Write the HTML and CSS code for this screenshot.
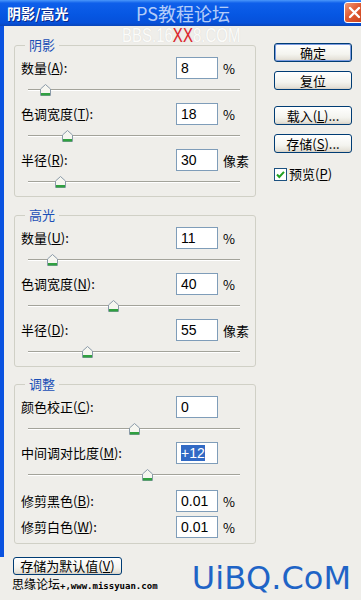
FILE: index.html
```html
<!DOCTYPE html>
<html lang="zh-CN">
<head>
  <meta charset="UTF-8" />
  <meta name="viewport" content="width=device-width, initial-scale=1" />
  <title>阴影/高光</title>
  <link rel="stylesheet" href="styles.css">
</head>
<body>
  <header class="titlebar">
    <span class="title">阴影/高光</span>
    <span class="close">
      <svg width="21" height="21" viewBox="0 0 21 21"><path d="M6 6 L15 15 M15 6 L6 15" stroke="#fff" stroke-width="2.4" stroke-linecap="round"/></svg>
    </span>
  </header>

  <!-- 水印 -->
  <div class="watermark">
    <span class="wm-ps">PS教程论坛</span>
    <span class="wm-bbs">BBS.16<b>XX</b>8.COM</span>
  </div>

  <main class="dialog">
    <div class="groups">
      <fieldset class="group">
        <legend>阴影</legend>
        <div class="field"><label>数量(<u>A</u>):</label><span class="input">8</span><span class="unit">%</span></div>
        <div class="slider"><div class="track"></div><span class="thumb" style="left: 8%"></span></div>
        <div class="field"><label>色调宽度(<u>T</u>):</label><span class="input">18</span><span class="unit">%</span></div>
        <div class="slider"><div class="track"></div><span class="thumb" style="left: 18.4%"></span></div>
        <div class="field"><label>半径(<u>R</u>):</label><span class="input">30</span><span class="unit">像素</span></div>
        <div class="slider"><div class="track"></div><span class="thumb" style="left: 15%"></span></div>
      </fieldset>

      <fieldset class="group">
        <legend>高光</legend>
        <div class="field"><label>数量(<u>U</u>):</label><span class="input">11</span><span class="unit">%</span></div>
        <div class="slider"><div class="track"></div><span class="thumb" style="left: 11.3%"></span></div>
        <div class="field"><label>色调宽度(<u>N</u>):</label><span class="input">40</span><span class="unit">%</span></div>
        <div class="slider"><div class="track"></div><span class="thumb" style="left: 40%"></span></div>
        <div class="field"><label>半径(<u>D</u>):</label><span class="input">55</span><span class="unit">像素</span></div>
        <div class="slider"><div class="track"></div><span class="thumb" style="left: 28%"></span></div>
      </fieldset>

      <fieldset class="group group-last">
        <legend>调整</legend>
        <div class="field"><label>颜色校正(<u>C</u>):</label><span class="input">0</span></div>
        <div class="slider"><div class="track"></div><span class="thumb" style="left: 50%"></span></div>
        <div class="field"><label>中间调对比度(<u>M</u>):</label><span class="input"><span class="selected">+12</span></span></div>
        <div class="slider"><div class="track"></div><span class="thumb" style="left: 56%"></span></div>
        <div class="field field-plain"><label>修剪黑色(<u>B</u>):</label><span class="input">0.01</span><span class="unit">%</span></div>
        <div class="field field-plain"><label>修剪白色(<u>W</u>):</label><span class="input">0.01</span><span class="unit">%</span></div>
      </fieldset>
    </div>

    <div class="actions">
      <button class="btn btn-default">确定</button>
      <button class="btn">复位</button>
      <button class="btn btn-gap">载入(<u>L</u>)...</button>
      <button class="btn">存储(<u>S</u>)...</button>
      <div class="check">
        <svg width="13" height="13" viewBox="0 0 13 13">
          <rect x="0.5" y="0.5" width="12" height="12" fill="#fff" stroke="#1c5180"/>
          <path d="M3 6.5 L5.3 9 L10 3.8" fill="none" stroke="#21a121" stroke-width="2"/>
        </svg>
        <span>预览(<u>P</u>)</span>
      </div>
    </div>
  </main>

  <footer class="footer">
    <div class="footer-left">
      <button class="btn btn-wide">存储为默认值(<u>V</u>)</button>
      <div class="credit">思缘论坛<span class="url">+,www.missyuan.com</span></div>
    </div>
    <div class="logo">UiBQ.CoM</div>
  </footer>
</body>
</html>
```

FILE: styles.css
```css
body {
  margin: 0;
  position: relative;
  width: 361px;
  height: 600px;
  overflow: hidden;
  background-color: #efeeea;
  color: #000;
  font-family: "Noto Sans CJK SC", "Noto Sans", sans-serif;
  font-size: 13px;
}
.titlebar {
  height: 26px;
  display: flex;
  justify-content: space-between;
  align-items: center;
  padding-left: 7px;
  background: linear-gradient(#4a97fa 0, #0e5fea 12%, #0657e3 55%, #0650da 88%, #0b45b8 100%);
  overflow: hidden;
}
.title {
  color: #fff;
  font-weight: bold;
  font-size: 14px;
  line-height: 16px;
  text-shadow: 1px 1px 0 #0b2a8a;
}
.close {
  width: 21px;
  height: 21px;
  margin-right: -4px;
  margin-top: -2px;
  box-sizing: border-box;
  border: 1px solid #fff;
  border-radius: 3px;
  background: linear-gradient(135deg, #f09a78 0, #e05a32 45%, #c8401c 100%);
  display: flex;
}
.close svg {
  margin: -1px;
}

.watermark {
  position: absolute;
  left: 0;
  top: 0;
  width: 361px;
  pointer-events: none;
}
.wm-ps {
  position: absolute;
  left: 136px;
  top: 1px;
  font-size: 18px;
  line-height: 24px;
  color: rgba(225, 236, 255, 0.8);
}
.wm-bbs {
  position: absolute;
  left: 122px;
  top: 24px;
  font-family: "Liberation Sans", sans-serif;
  font-size: 20px;
  line-height: 22px;
  color: #fcfcfa;
  text-shadow: 0 0 1px rgba(150, 150, 150, 0.3);
  transform: scaleX(0.75);
  transform-origin: left top;
}
.wm-bbs b {
  font-weight: normal;
  color: #e0242a;
}

.dialog {
  height: 531px;
  box-sizing: border-box;
  border-left: 4px solid #0a52e0;
  padding: 11px 0 0 10px;
  display: flex;
}
.groups {
  width: 242px;
}
.group {
  margin: 0 0 10px 0;
  padding: 4px 0 1px 0;
  border: 1px solid #d0d0c6;
  border-radius: 3px;
  min-inline-size: 0;
}
.group + .group-last {
  margin-top: -1px;
}
.group-last {
  padding-bottom: 5px;
}
.group legend {
  margin-left: 10px;
  padding: 0 4px;
  font-size: 13px;
  line-height: 16px;
  color: #1a4fb6;
}
.field {
  height: 22px;
  display: flex;
  align-items: center;
  padding-left: 6px;
}
.field-plain {
  margin-top: 2px;
}
.field-plain + .field-plain {
  margin-top: 4px;
}
.field label {
  flex: 0 0 155px;
  line-height: 22px;
}
.input {
  width: 42px;
  height: 22px;
  box-sizing: border-box;
  border: 1px solid #7f9db9;
  background: #fff;
  padding-left: 4px;
  font-family: "Liberation Sans", sans-serif;
  font-size: 14px;
  line-height: 20px;
}
.selected {
  background: #316ac5;
  color: #fff;
}
.unit {
  margin-left: 5px;
}
.slider {
  position: relative;
  height: 24px;
  margin-left: 13px;
  width: 212px;
}
.track {
  position: absolute;
  left: 0;
  right: 0;
  top: 10px;
  height: 1px;
  background: #a3a39a;
  border-bottom: 1px solid #fff;
}
.thumb {
  position: absolute;
  top: 5px;
  width: 11px;
  height: 12px;
  margin-left: -5px;
  background: url("data:image/svg+xml,%3Csvg xmlns='http://www.w3.org/2000/svg' width='11' height='12'%3E%3Cpath d='M0.5 11.5 V5 L5.5 0.5 L10.5 5 V11.5 Z' fill='%23f6f6f0' stroke='%238a9aa8'/%3E%3Crect x='1' y='9' width='9' height='2.5' fill='%2330a040'/%3E%3C/svg%3E");
}

.actions {
  margin-left: 18px;
  padding-top: 6px;
  width: 78px;
  display: flex;
  flex-direction: column;
}
.btn {
  height: 19px;
  padding: 0;
  border: 1px solid #003c74;
  border-radius: 3px;
  background: linear-gradient(#ffffff 0, #f4f4ef 60%, #e6e3da 88%, #d6d0c5 100%);
  font-family: "Noto Sans CJK SC", "Noto Sans", sans-serif;
  font-size: 13px;
  line-height: 16px;
  color: #000;
  margin-bottom: 9px;
}
.btn-default {
  box-shadow: inset 0 0 0 1px #7b9be0;
}
.btn-gap {
  margin-top: 7px;
}
.check {
  display: flex;
  align-items: center;
  gap: 2px;
  margin-top: 4px;
  line-height: 16px;
}

.footer {
  display: flex;
  justify-content: space-between;
}
.footer-left {
  padding-left: 13px;
}
.btn-wide {
  width: 109px;
  height: 18px;
  margin: 0;
  display: block;
}
.credit {
  margin-left: -1px;
  margin-top: 1px;
  font-size: 12px;
  line-height: 16px;
}
.url {
  font-family: "DejaVu Sans Mono", monospace;
  font-size: 9px;
  font-weight: bold;
}
.logo {
  margin-right: 10px;
  margin-top: 1px;
  font-family: "DejaVu Sans", sans-serif;
  font-size: 32px;
  line-height: 40px;
  color: #1f64c6;
}
```
